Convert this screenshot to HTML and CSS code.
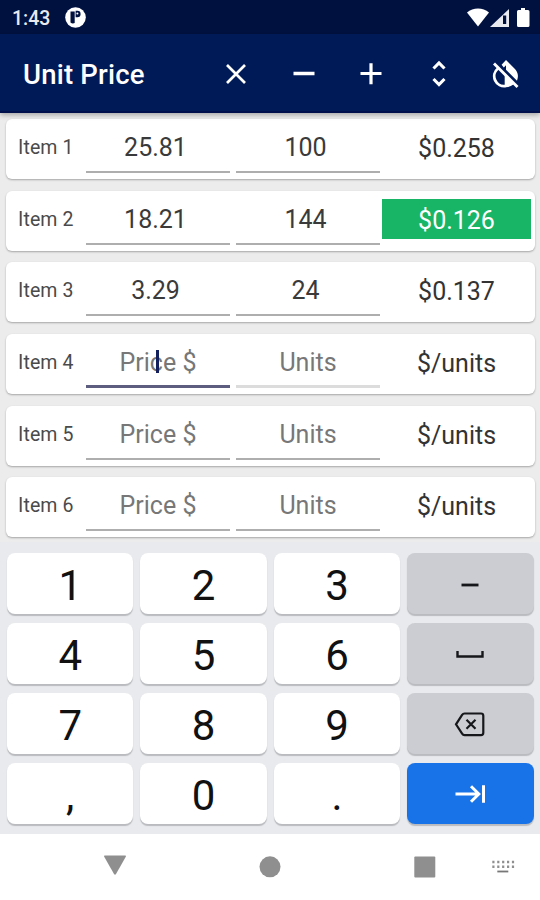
FILE: index.html
```html
<!DOCTYPE html>
<html lang="en">
<head>
  <meta charset="UTF-8">
  <title>Unit Price</title>
  <link rel="stylesheet" href="styles.css">
</head>
<body>

<div class="status-bar">
  <span class="clock">1:43</span>
  <svg class="app-dot" width="21" height="21" viewBox="0 0 21 21">
    <circle cx="10.5" cy="10.5" r="10.3" fill="#fff"/>
    <path d="M5.500 4.500h4.200v11.500q-2.200 1-4.200-.5z" fill="#001140"/>
    <path d="M10.600 3.800h1.800a3.200 3.200 0 0 1 0 6.400h-1.800z" fill="#001140"/>
    <circle cx="12.400" cy="6.500" r="1" fill="#fff"/>
  </svg>
  <svg class="signals" width="64" height="20" viewBox="0 0 64 20">
    <path d="M0 4.500C6-.7 16-.7 22 4.500L11 18.500z" fill="#fff"/>
    <path d="M42 1v18H23z" fill="#e9eaf0"/>
    <path d="M36 7.500h3.200V16H36z" fill="#001140"/>
    <path d="M54 0h4v2h3q1.500 0 1.500 1.500V17.500q0 1.500-1.500 1.500h-9.500q-1.500 0-1.500-1.500V3.500q0-1.500 1.500-1.500H54z" fill="#fff"/>
  </svg>
</div>

<header class="app-bar">
  <h1>Unit Price</h1>
  <nav class="actions">
    <svg viewBox="0 0 28 28"><path d="M5 5l18 18M23 5L5 23" stroke-width="2.700"/></svg>
    <svg viewBox="0 0 28 28"><path d="M3.500 13.500h21" stroke-width="3.500"/></svg>
    <svg viewBox="0 0 28 28"><path d="M3.500 13.500h21M14 3.300v21" stroke-width="3.200"/></svg>
    <svg viewBox="0 0 28 28"><path d="M8.500 8.500L14 3l5.500 5.500M8.500 19L14 24.500 19.500 19" stroke-width="3.100"/></svg>
    <svg viewBox="0 0 28 28">
      <path d="M14 0l8.200 8.200a11.500 11.500 0 0 1 2.800 12.500L14 9.700V5.200l-2.200 2.200-2.200-2.700z" fill="#fff" stroke="none"/>
      <path d="M6 8.500a9.800 9.800 0 0 0 8 17.300 11 11 0 0 0 6.500-2.300" stroke-width="2.800"/>
      <path d="M12.700 13l9.500 10q-4 4-9.500 3.500z" fill="#fff" stroke="none"/>
      <path d="M4.500 3L27.500 26" stroke="#001a57" stroke-width="2"/>
      <path d="M2 3.500L25.500 27" stroke-width="2.800"/>
    </svg>
  </nav>
</header>

<main class="items">
  <div class="item">
    <label>Item 1</label>
    <div class="field"><input type="text" placeholder="Price $" value="25.81"></div>
    <div class="field"><input type="text" placeholder="Units" value="100"></div>
    <div class="result">$0.258</div>
  </div>
  <div class="item">
    <label>Item 2</label>
    <div class="field"><input type="text" placeholder="Price $" value="18.21"></div>
    <div class="field"><input type="text" placeholder="Units" value="144"></div>
    <div class="result best">$0.126</div>
  </div>
  <div class="item">
    <label>Item 3</label>
    <div class="field"><input type="text" placeholder="Price $" value="3.29"></div>
    <div class="field"><input type="text" placeholder="Units" value="24"></div>
    <div class="result">$0.137</div>
  </div>
  <div class="item">
    <label>Item 4</label>
    <div class="field active"><input type="text" placeholder="Price $"><span class="caret"></span></div>
    <div class="field pale"><input type="text" placeholder="Units"></div>
    <div class="result">$/units</div>
  </div>
  <div class="item">
    <label>Item 5</label>
    <div class="field"><input type="text" placeholder="Price $"></div>
    <div class="field"><input type="text" placeholder="Units"></div>
    <div class="result">$/units</div>
  </div>
  <div class="item">
    <label>Item 6</label>
    <div class="field"><input type="text" placeholder="Price $"></div>
    <div class="field"><input type="text" placeholder="Units"></div>
    <div class="result">$/units</div>
  </div>
</main>

<div class="keyboard">
  <div class="key">1</div>
  <div class="key">2</div>
  <div class="key">3</div>
  <div class="key fn"><svg width="32" height="28" viewBox="0 0 32 28"><path d="M7.500 15h17" stroke-width="2.800"/></svg></div>
  <div class="key">4</div>
  <div class="key">5</div>
  <div class="key">6</div>
  <div class="key fn"><svg width="32" height="28" viewBox="0 0 32 28"><path d="M3.500 11v5.500h25V11" stroke-width="2.400"/></svg></div>
  <div class="key">7</div>
  <div class="key">8</div>
  <div class="key">9</div>
  <div class="key fn">
    <svg width="32" height="28" viewBox="0 0 32 28">
      <path d="M10.500 3.500h16.500q2.300 0 2.300 2.300v17q0 2.300-2.300 2.300H10.500q-1.500 0-2.400-1.400L2 14.300l6.100-9.400q.9-1.400 2.400-1.400z" stroke-width="2.200"/>
      <path d="M12.500 9.800l9 9M21.500 9.800l-9 9" stroke-width="2.200"/>
    </svg>
  </div>
  <div class="key">,</div>
  <div class="key">0</div>
  <div class="key">.</div>
  <div class="key enter"><svg width="32" height="28" viewBox="0 0 32 28"><path d="M1.500 14H25M17 6.300l7.800 7.700L17 21.700M29.500 5.300v17.400" stroke-width="3"/></svg></div>
</div>

<footer class="nav-bar">
  <svg width="540" height="66" viewBox="0 0 540 66" fill="#8f8f8f">
    <path d="M105 21.500h20q1.500 0 .8 1.300L116 40q-1 1.500-2 0L104.200 22.800q-.7-1.300.8-1.300z"/>
    <circle cx="270" cy="32.800" r="10.500"/>
    <rect x="414.300" y="22.500" width="21" height="21" rx="1"/>
    <path d="M492.300 28h22M492.300 32.700h22" stroke="#8f8f8f" stroke-width="2.600" stroke-dasharray="2.200 2.700"/>
    <path d="M497.300 37.500h11" stroke="#777" stroke-width="1.800"/>
  </svg>
</footer>

</body>
</html>
```
FILE: styles.css
```css
* {
  box-sizing: border-box;
}
body {
  margin: 0;
  width: 540px;
  height: 900px;
  overflow: hidden;
  display: flex;
  flex-direction: column;
  font-family: Roboto, "Liberation Sans", sans-serif;
  background: #ececec;
}
svg {
  display: block;
}

/* top bars */
.status-bar {
  height: 34px;
  padding: 1px 9px 0 12px;
  display: flex;
  align-items: center;
  background: #001140;
  color: #e8eaf0;
}
.clock {
  padding-top: 2px;
  font-size: 19.5px;
  font-weight: 500;
}
.app-dot {
  margin-left: 15px;
}
.signals {
  margin-left: auto;
}
.app-bar {
  height: 79px;
  padding: 1px 20px 0 23px;
  display: flex;
  align-items: center;
  justify-content: space-between;
  background: #001a57;
  border-bottom: 2px solid #00104c;
  box-shadow: 0 2px 5px rgba(0, 0, 0, 0.3);
  z-index: 1;
}
.app-bar h1 {
  margin: 0;
  padding-top: 3px;
  font-size: 27.5px;
  font-weight: 500;
  letter-spacing: 0.2px;
  color: #fff;
}
.actions {
  padding-top: 2px;
  display: flex;
  gap: 39.5px;
}
.actions svg {
  width: 28px;
  height: 28px;
  fill: none;
  stroke: #fff;
}

/* item rows */
.items {
  height: 429px;
  padding: 6px 5.5px 0 6px;
  display: flex;
  flex-direction: column;
  gap: 11.7px;
}
.item {
  flex: none;
  height: 60px;
  padding: 0 3px 0 12px;
  display: grid;
  grid-template-columns: 68px 144px 144px 149px;
  background: #fff;
  border-radius: 6px;
  box-shadow: 0 1px 2px rgba(0, 0, 0, 0.3);
}
.item label {
  padding-top: 17px;
  font-size: 19.5px;
  line-height: 24px;
  letter-spacing: 0.1px;
  color: #4a4a4a;
}
.field {
  position: relative;
  height: 54px;
  border-bottom: 2px solid #aeaeae;
}
.field + .field {
  margin-left: 6px;
  margin-right: -6px;
}
.field.active {
  border-bottom: 3px solid #5d5d80;
}
.field.pale {
  border-bottom: 3px solid #dcdcdc;
}
.field input {
  display: block;
  width: 100%;
  height: 30px;
  margin-top: 13.4px;
  padding: 0 5px 0 0;
  border: 0;
  outline: 0;
  background: none;
  font-family: inherit;
  font-size: 25px;
  text-align: center;
  color: #3a3a3a;
}
.field input:placeholder-shown {
  padding-right: 0;
}
.field input::placeholder {
  color: #777;
}
.caret {
  position: absolute;
  left: 69.5px;
  top: 16px;
  width: 3px;
  height: 23px;
  background: #14205c;
}
.result {
  height: 40px;
  margin: 8px -8px 0 8px;
  line-height: 43px;
  font-size: 25px;
  text-align: center;
  color: #333;
}
.result.best {
  background: #18b566;
  color: #fff;
}

/* number pad */
.keyboard {
  height: 292px;
  padding: 11px 6.5px 0 7px;
  display: grid;
  grid-template-columns: repeat(4, 1fr);
  grid-auto-rows: 61px;
  gap: 9px 7px;
  background: #e8eaed;
}
.key {
  display: flex;
  align-items: center;
  justify-content: center;
  padding-top: 4px;
  border-radius: 8px;
  background: #fff;
  box-shadow: 0 1.5px 1px #b9bbbf;
  font-size: 42px;
  color: #111;
}
.key svg {
  fill: none;
  stroke: #15171a;
}
.key.fn {
  padding: 0;
  background: #cccdd2;
}
.key.enter {
  padding: 0;
  background: #1973e8;
}
.key.enter svg {
  stroke: #fff;
}

.nav-bar {
  height: 66px;
  background: #fff;
}
```
